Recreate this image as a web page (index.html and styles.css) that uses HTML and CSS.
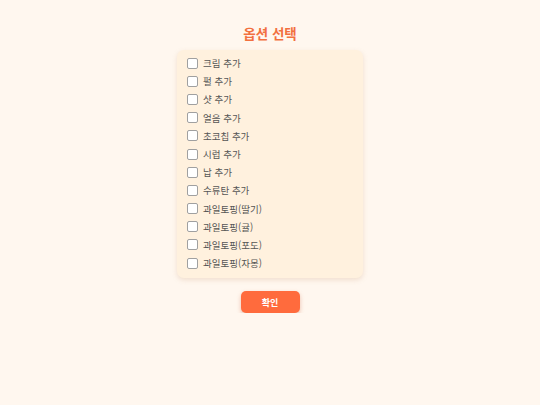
FILE: index.html
```html
<!DOCTYPE html>
<html lang="ko">
<head>
<meta charset="utf-8">
<link rel="stylesheet" href="styles.css">
</head>
<body>
<div class="page">
  <h1 class="title">옵션 선택</h1>
  <div class="card">
    <label class="row"><span class="box"></span><span class="txt">크림 추가</span></label>
    <label class="row"><span class="box"></span><span class="txt">펄 추가</span></label>
    <label class="row"><span class="box"></span><span class="txt">샷 추가</span></label>
    <label class="row"><span class="box"></span><span class="txt">얼음 추가</span></label>
    <label class="row"><span class="box"></span><span class="txt">초코칩 추가</span></label>
    <label class="row"><span class="box"></span><span class="txt">시럽 추가</span></label>
    <label class="row"><span class="box"></span><span class="txt">납 추가</span></label>
    <label class="row"><span class="box"></span><span class="txt">수류탄 추가</span></label>
    <label class="row"><span class="box"></span><span class="txt">과일토핑(딸기)</span></label>
    <label class="row"><span class="box"></span><span class="txt">과일토핑(귤)</span></label>
    <label class="row"><span class="box"></span><span class="txt">과일토핑(포도)</span></label>
    <label class="row"><span class="box"></span><span class="txt">과일토핑(자몽)</span></label>
  </div>
  <button class="btn">확인</button>
</div>
</body>
</html>
```
FILE: styles.css
```css
html, body {
  margin: 0;
  padding: 0;
  background: #fff7ef;
  font-family: "Noto Sans CJK KR", "Noto Sans", sans-serif;
}
.page {
  display: flex;
  flex-direction: column;
  align-items: center;
  padding-top: 24px;
}
.title {
  margin: 0;
  font-size: 13.5px;
  line-height: 18px;
  font-weight: 700;
  color: #f2703f;
}
.card {
  margin-top: 8px;
  width: 186px;
  box-sizing: border-box;
  padding: 4px 10px 6px;
  background: #fff1de;
  border-radius: 7px;
  box-shadow: 0 2px 5px rgba(200, 150, 110, 0.25);
  display: flex;
  flex-direction: column;
}
.row {
  display: flex;
  align-items: center;
  height: 18.2px;
}
.box {
  width: 9px;
  height: 9px;
  border: 1px solid #a0a0a0;
  border-radius: 2px;
  background: #fff;
}
.txt {
  margin-left: 5px;
  font-size: 9.5px;
  color: #555;
}
.btn {
  margin-top: 13px;
  width: 59px;
  height: 22px;
  border: none;
  border-radius: 5px;
  background: #ff6b3d;
  color: #fff;
  font-family: inherit;
  font-size: 9px;
  font-weight: 700;
  box-shadow: 0 2px 4px rgba(200, 90, 50, 0.35);
  padding: 0;
}
```
